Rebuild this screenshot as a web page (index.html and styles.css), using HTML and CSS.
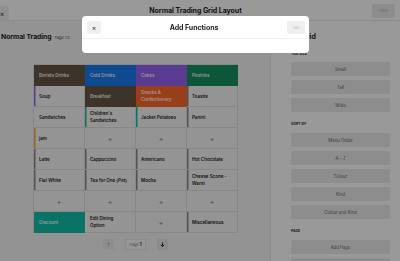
FILE: index.html
```html
<!DOCTYPE html>
<html>
<head>
<title>Normal Trading Grid Layout</title>
<meta charset="UTF-8">
<link rel="stylesheet" href="styles.css">
</head>
<body>

<header class="topbar">
  <div class="topbar-side">
    <button class="icon-btn close-page">&times;</button>
  </div>
  <h1 class="topbar-title">Normal Trading Grid Layout</h1>
  <div class="topbar-side right">
    <button class="save-btn">Save</button>
  </div>
</header>

<div class="workspace">
  <main class="editor">
    <div class="editor-head">
      <h2>Normal Trading</h2>
      <span class="page-tag">Page 1/2</span>
    </div>

    <div class="grid">
      <div class="cell tile brown">Barista Drinks</div>
      <div class="cell tile blue">Cold Drinks</div>
      <div class="cell tile purple">Cakes</div>
      <div class="cell tile green">Pastries</div>

      <div class="cell item s-purple">Soup</div>
      <div class="cell tile brown">Breakfast</div>
      <div class="cell tile orange">Snacks &amp;<br>Confectionary</div>
      <div class="cell item s-gray">Toastie</div>

      <div class="cell item">Sandwiches</div>
      <div class="cell item s-teal">Children's<br>Sandwiches</div>
      <div class="cell item s-teal">Jacket Potatoes</div>
      <div class="cell item s-gray">Panini</div>

      <div class="cell item s-amber">jam</div>
      <div class="cell empty">+</div>
      <div class="cell empty">+</div>
      <div class="cell empty">+</div>

      <div class="cell item s-gray">Latte</div>
      <div class="cell item s-gray">Cappuccino</div>
      <div class="cell item s-gray">Americano</div>
      <div class="cell item s-gray">Hot Chocolate</div>

      <div class="cell item s-gray">Flat White</div>
      <div class="cell item s-gray">Tea for One (Pot)</div>
      <div class="cell item s-gray">Mocha</div>
      <div class="cell item s-gray">Cheese Scone -<br>Warm</div>

      <div class="cell empty">+</div>
      <div class="cell empty">+</div>
      <div class="cell empty">+</div>
      <div class="cell empty">+</div>

      <div class="cell tile teal">Discount</div>
      <div class="cell item">Edit Dining<br>Option</div>
      <div class="cell empty">+</div>
      <div class="cell item s-gray">Miscellaneous</div>
    </div>

    <div class="pager">
      <button class="page-btn off">
        <svg width="5" height="5" viewBox="0 0 10 10"><path d="M5 9V1M1.5 4.5L5 1l3.5 3.5" fill="none" stroke="currentColor" stroke-width="1.6"/></svg>
      </button>
      <div class="page-box">Page <b>1</b></div>
      <button class="page-btn">
        <svg width="5" height="5" viewBox="0 0 10 10"><path d="M5 1v8M1.5 5.5L5 9l3.5-3.5" fill="none" stroke="currentColor" stroke-width="1.8"/></svg>
      </button>
    </div>
  </main>

  <aside class="sidebar">
    <h3>Edit Grid</h3>

    <div class="label first">Tile Size</div>
    <div class="opt-list">
      <button class="opt">Small</button>
      <button class="opt">Tall</button>
      <button class="opt">Wide</button>
    </div>

    <div class="label">Sort By</div>
    <div class="opt-list">
      <button class="opt">Menu Order</button>
      <button class="opt">A &ndash; Z</button>
      <button class="opt">Colour</button>
      <button class="opt">Kind</button>
      <button class="opt">Colour and Kind</button>
    </div>

    <div class="label">Page</div>
    <div class="opt-list">
      <button class="opt">Add Page</button>
      <button class="opt"></button>
    </div>
  </aside>
</div>

<div class="backdrop">
  <div class="modal">
    <div class="modal-head">
      <button class="icon-btn">&times;</button>
      <h4>Add Functions</h4>
      <button class="add-btn">Add</button>
    </div>
    <div class="modal-body"></div>
  </div>
</div>

</body>
</html>
```

FILE: styles.css
```css
html, body {
  margin: 0;
  padding: 0;
  width: 400px;
  height: 261px;
  overflow: hidden;
  background: #fff;
  font-family: Inter, "Noto Sans", sans-serif;
  color: #1c1c1c;
}

button {
  font-family: inherit;
  border: none;
  padding: 0;
  cursor: pointer;
}

/* top bar */
.topbar {
  height: 20px;
  border-bottom: 1px solid #e6e6e6;
  display: grid;
  grid-template-columns: 1fr auto 1fr;
  align-items: center;
  padding-right: 9px;
  background: #fff;
}
.topbar-side.right {
  display: flex;
  justify-content: flex-end;
  margin-right: -4px;
}
.topbar-title {
  margin: 0;
  font-size: 7px;
  font-weight: 700;
  letter-spacing: -0.05px;
}
.icon-btn {
  width: 14px;
  height: 13px;
  border-radius: 2px;
  background: #efefef;
  color: #333;
  font-size: 7px;
  line-height: 13px;
}
.close-page {
  margin-left: -5px;
  height: 15px;
}
.save-btn {
  width: 23px;
  height: 14px;
  border-radius: 2px;
  background: #ececec;
  color: #b5b5b5;
  font-size: 4px;
}

/* editor */
.workspace {
  display: flex;
  height: 240px;
}
.editor {
  width: 270px;
  background: #f5f5f5;
}
.editor-head {
  display: flex;
  align-items: baseline;
  gap: 3px;
  padding: 11px 0 0 1px;
  height: 32px;
  box-sizing: border-box;
}
.editor-head h2 {
  margin: 0;
  font-size: 6.8px;
  line-height: 10px;
  font-weight: 700;
  letter-spacing: -0.05px;
}
.page-tag {
  font-size: 3.8px;
  color: #555;
}

.grid {
  margin-top: 11px;
  margin-left: 33px;
  width: 205px;
  display: grid;
  grid-template-columns: repeat(4, 1fr);
  grid-auto-rows: 21px;
  border-top: 1px solid #e2e2e2;
  border-left: 1px solid #e2e2e2;
  box-sizing: border-box;
}
.cell {
  border-right: 1px solid #e2e2e2;
  border-bottom: 1px solid #e2e2e2;
  display: flex;
  align-items: center;
  padding-left: 5px;
  font-size: 4.5px;
  line-height: 7px;
  background: #f7f7f7;
  overflow: hidden;
}
.item {
  font-weight: 600;
  color: #222;
}
.tile {
  color: #fff;
  font-weight: 500;
  border-color: transparent;
}
.empty {
  justify-content: center;
  padding-left: 0;
  color: #777;
  font-size: 7px;
}
.brown { background: #685545; }
.blue { background: #1a7aee; }
.purple { background: #9565f2; }
.green { background: #14925f; }
.orange { background: #fd6a2c; }
.teal { background: #10c2ab; }

.s-purple { box-shadow: inset 1.5px 0 0 #9565f2; }
.s-teal { box-shadow: inset 1.5px 0 0 #10c2ab; }
.s-amber { box-shadow: inset 1.5px 0 0 #f0b030; }
.s-gray { box-shadow: inset 1.5px 0 0 #8a8a8a; }

.pager {
  width: 205px;
  margin-left: 33px;
  margin-top: 6px;
  display: flex;
  justify-content: center;
  align-items: center;
  gap: 11px;
}
.page-btn {
  width: 11px;
  height: 11px;
  border-radius: 1.5px;
  background: #e6e6e6;
  color: #222;
  display: flex;
  align-items: center;
  justify-content: center;
}
.page-btn.off {
  color: #b8b8b8;
  background: #ececec;
}
.page-box {
  width: 21px;
  height: 11px;
  box-sizing: border-box;
  background: #fbfbfb;
  border: 0.5px solid #e6e6e6;
  font-size: 3.8px;
  color: #888;
  display: flex;
  align-items: center;
  justify-content: center;
  gap: 1px;
}
.page-box b {
  color: #222;
  font-size: 4.3px;
}

/* sidebar */
.sidebar {
  width: 130px;
  background: #fff;
  border-left: 1px solid #ececec;
  box-sizing: border-box;
  padding: 11px 10px 0 20px;
}
.sidebar h3 {
  margin: 0 0 0 -4px;
  font-size: 7px;
  font-weight: 700;
  line-height: 10px;
  letter-spacing: -0.05px;
}
.label {
  font-size: 3.5px;
  font-weight: 700;
  text-transform: uppercase;
  line-height: 5px;
  margin: 10px 0 6px;
  color: #333;
}
.label.first {
  margin: 10px 0 5px;
}
.opt-list {
  display: flex;
  flex-direction: column;
  gap: 4px;
}
.opt {
  height: 14px;
  border-radius: 1.5px;
  background: #ececec;
  color: #666;
  font-size: 4.3px;
}

/* modal */
.backdrop {
  position: fixed;
  left: 0;
  top: 0;
  width: 400px;
  height: 261px;
  background: rgba(0, 0, 0, 0.4);
  display: flex;
  justify-content: center;
  align-items: flex-start;
  padding: 16px 9px 0 0;
  box-sizing: border-box;
}
.modal {
  width: 227px;
  background: #fff;
  border-radius: 4px;
  overflow: hidden;
}
.modal-head {
  height: 22px;
  border-bottom: 1px solid #f0f0f0;
  display: flex;
  align-items: center;
  justify-content: space-between;
  padding: 0 4px 0 5px;
}
.modal-head h4 {
  margin: 0;
  font-size: 7px;
  font-weight: 700;
  letter-spacing: -0.05px;
}
.add-btn {
  width: 18px;
  height: 13px;
  border-radius: 2px;
  background: #f0f0f0;
  color: #c0c0c0;
  font-size: 3.8px;
}
.modal-body {
  height: 14px;
}
```
